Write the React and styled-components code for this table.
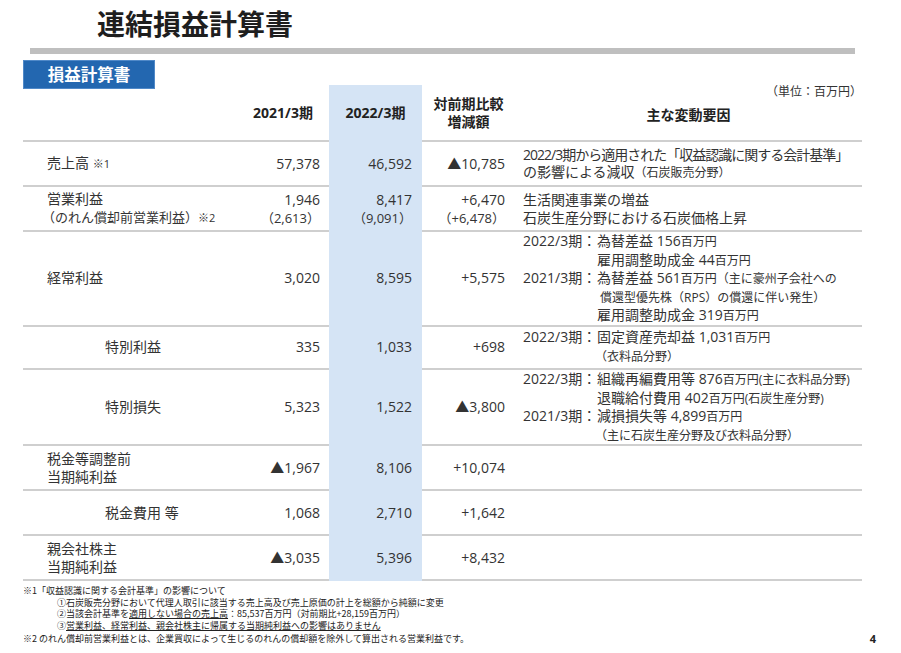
import React from "react";
import styled, { createGlobalStyle } from "styled-components";

const GlobalStyle = createGlobalStyle`
  html, body {
    margin: 0;
    padding: 0;
    background: #fff;
  }
  body {
    font-family: "Open Sans", "Noto Sans CJK JP", sans-serif;
    color: #333;
  }
`;

const Page = styled.div`
  width: 901px;
  height: 653px;
  overflow: hidden;
  background: #fff;
`;

const Title = styled.h1`
  margin: 0;
  padding: 4px 0 0 97px;
  font-family: "Noto Sans CJK JP", sans-serif;
  font-size: 28px;
  line-height: 38px;
  font-weight: 700;
  color: #1e1e1e;
`;

const Rule = styled.div`
  margin: 6px 0 0 30px;
  width: 825px;
  height: 6px;
  background: #bfbfbf;
`;

const Tab = styled.div`
  margin: 6px 0 0 23px;
  width: 132px;
  height: 29px;
  box-sizing: border-box;
  background: #2367b0;
  border: 1px solid #5089c8;
  color: #fff;
  font-family: "Noto Sans CJK JP", sans-serif;
  font-weight: 700;
  font-size: 16.5px;
  line-height: 27px;
  text-align: center;
`;

const Table = styled.div`
  margin: -4px 0 0 23px;
  width: 839px;
`;

const Row = styled.div`
  display: grid;
  grid-template-columns: 214px 92px 93px 93px 347px;
  height: ${(p) => p.$h}px;
`;

const Cell = styled.div`
  display: flex;
  flex-direction: column;
  justify-content: center;
  box-sizing: border-box;
  border-bottom: 2px solid ${(p) => (p.$hl ? "transparent" : "#cfcfcf")};
  background: ${(p) => (p.$hl ? "#d5e4f5" : "transparent")};
  font-size: 14px;
  line-height: 18px;
`;

const HeadCell = styled(Cell)`
  align-items: center;
  text-align: center;
  font-weight: 700;
  color: #222;
`;

const ReasonHead = styled(Cell)`
  justify-content: flex-start;
  font-weight: 700;
  color: #222;
`;

const Unit = styled.div`
  font-size: 12px;
  line-height: 14px;
  font-weight: 400;
  text-align: right;
  color: #333;
`;

const ReasonTitle = styled.div`
  margin-top: 7px;
  text-align: center;
`;

const LabelCell = styled(Cell)`
  padding-left: ${(p) => (p.$indent ? 82 : 24)}px;
`;

const NumCell = styled(Cell)`
  align-items: flex-end;
  padding-right: ${(p) => p.$pr}px;
`;

const SubLine = styled.div`
  font-size: 13px;
  margin-left: ${(p) => p.$shift || 0}px;
`;

const Note = styled.span`
  font-size: 11px;
`;

const Reason = styled(Cell)`
  padding-left: 8px;
  line-height: 17.5px;
`;

const RLine = styled.div`
  white-space: nowrap;
  padding-left: ${(p) => p.$indent || 0}px;
  letter-spacing: ${(p) => p.$tight || 0}px;
`;

const Period = styled.span`
  display: inline-block;
  width: 74px;
`;

const Small = styled.span`
  font-size: 12px;
`;

const Notes = styled.div`
  margin: 4px 0 0 23px;
  font-family: "Noto Sans CJK JP", sans-serif;
  font-size: 9px;
  line-height: 11.5px;
  color: #222;
`;

const NoteLine = styled.div`
  white-space: nowrap;
  padding-left: ${(p) => (p.$sub ? 34 : 0)}px;
`;

const U = styled.span`
  text-decoration: underline;
  text-underline-offset: 1px;
`;

const Footer = styled.div`
  display: flex;
  justify-content: space-between;
  align-items: center;
  margin-top: 2px;
  padding-right: 25px;
`;

const PageNo = styled.span`
  font-family: "Open Sans", sans-serif;
  font-size: 11px;
  font-weight: 700;
  color: #222;
`;

const rows = [
  {
    h: 45,
    label: (
      <>
        <div>
          売上高 <Note>※1</Note>
        </div>
      </>
    ),
    a: ["57,378"],
    b: ["46,592"],
    c: ["▲10,785"],
    reason: (
      <>
        <RLine $tight={-1}>2022/3期から適用された「収益認識に関する会計基準」</RLine>
        <RLine>
          の影響による減収<Small>（石炭販売分野）</Small>
        </RLine>
      </>
    ),
  },
  {
    h: 45,
    label: (
      <>
        <div>営業利益</div>
        <SubLine $shift={-5}>
          （のれん償却前営業利益）<Note>※2</Note>
        </SubLine>
      </>
    ),
    a: ["1,946", "（2,613）"],
    b: ["8,417", "（9,091）"],
    c: ["+6,470", "（+6,478）"],
    reason: (
      <>
        <RLine>生活関連事業の増益</RLine>
        <RLine>石炭生産分野における石炭価格上昇</RLine>
      </>
    ),
  },
  {
    h: 93,
    label: <div>経常利益</div>,
    a: ["3,020"],
    b: ["8,595"],
    c: ["+5,575"],
    reason: (
      <>
        <RLine>
          <Period>2022/3期：</Period>為替差益 156<Small>百万円</Small>
        </RLine>
        <RLine $indent={74}>
          雇用調整助成金 44<Small>百万円</Small>
        </RLine>
        <RLine>
          <Period>2021/3期：</Period>為替差益 561<Small>百万円（主に豪州子会社への</Small>
        </RLine>
        <RLine $indent={77}>
          <Small>償還型優先株（RPS）の償還に伴い発生）</Small>
        </RLine>
        <RLine $indent={74}>
          雇用調整助成金 319<Small>百万円</Small>
        </RLine>
      </>
    ),
  },
  {
    h: 45,
    indent: true,
    label: <div>特別利益</div>,
    a: ["335"],
    b: ["1,033"],
    c: ["+698"],
    reason: (
      <>
        <RLine>
          <Period>2022/3期：</Period>固定資産売却益 1,031<Small>百万円</Small>
        </RLine>
        <RLine $indent={72}>
          <Small>（衣料品分野）</Small>
        </RLine>
      </>
    ),
  },
  {
    h: 76,
    indent: true,
    label: <div>特別損失</div>,
    a: ["5,323"],
    b: ["1,522"],
    c: ["▲3,800"],
    reason: (
      <>
        <RLine>
          <Period>2022/3期：</Period>組織再編費用等 876<Small>百万円(主に衣料品分野)</Small>
        </RLine>
        <RLine $indent={74}>
          退職給付費用 402<Small>百万円(石炭生産分野)</Small>
        </RLine>
        <RLine>
          <Period>2021/3期：</Period>減損損失等 4,899<Small>百万円</Small>
        </RLine>
        <RLine $indent={72}>
          <Small>（主に石炭生産分野及び衣料品分野）</Small>
        </RLine>
      </>
    ),
  },
  {
    h: 45,
    label: (
      <>
        <div>税金等調整前</div>
        <div>当期純利益</div>
      </>
    ),
    a: ["▲1,967"],
    b: ["8,106"],
    c: ["+10,074"],
    reason: null,
  },
  {
    h: 45,
    indent: true,
    label: <div>税金費用 等</div>,
    a: ["1,068"],
    b: ["2,710"],
    c: ["+1,642"],
    reason: null,
  },
  {
    h: 45,
    label: (
      <>
        <div>親会社株主</div>
        <div>当期純利益</div>
      </>
    ),
    a: ["▲3,035"],
    b: ["5,396"],
    c: ["+8,432"],
    reason: null,
  },
];

function Nums({ values }) {
  return values.map((v, i) =>
    i === 0 ? <div key={i}>{v}</div> : <SubLine key={i}>{v}</SubLine>
  );
}

export default function App() {
  return (
    <Page>
      <GlobalStyle />
      <Title>連結損益計算書</Title>
      <Rule />
      <Tab>損益計算書</Tab>
      <Table>
        <Row $h={57}>
          <HeadCell />
          <HeadCell>2021/3期</HeadCell>
          <HeadCell $hl>2022/3期</HeadCell>
          <HeadCell>
            <div>対前期比較</div>
            <div>増減額</div>
          </HeadCell>
          <ReasonHead>
            <Unit>（単位：百万円）</Unit>
            <ReasonTitle>主な変動要因</ReasonTitle>
          </ReasonHead>
        </Row>
        {rows.map((r, i) => (
          <Row key={i} $h={r.h}>
            <LabelCell $indent={r.indent}>{r.label}</LabelCell>
            <NumCell $pr={9}>
              <Nums values={r.a} />
            </NumCell>
            <NumCell $pr={10} $hl>
              <Nums values={r.b} />
            </NumCell>
            <NumCell $pr={10}>
              <Nums values={r.c} />
            </NumCell>
            <Reason>{r.reason}</Reason>
          </Row>
        ))}
      </Table>
      <Notes>
        <NoteLine>※1「収益認識に関する会計基準」の影響について</NoteLine>
        <NoteLine $sub>
          ①石炭販売分野において代理人取引に該当する売上高及び売上原価の計上を総額から純額に変更
        </NoteLine>
        <NoteLine $sub>
          ②当該会計基準を<U>適用しない場合の売上高</U>：85,537百万円（対前期比+28,159百万円）
        </NoteLine>
        <NoteLine $sub>
          ③<U>営業利益、経常利益、親会社株主に帰属する当期純利益への影響はありません</U>
        </NoteLine>
        <Footer>
          <NoteLine>
            ※2 のれん償却前営業利益とは、企業買収によって生じるのれんの償却額を除外して算出される営業利益です。
          </NoteLine>
          <PageNo>4</PageNo>
        </Footer>
      </Notes>
    </Page>
  );
}
